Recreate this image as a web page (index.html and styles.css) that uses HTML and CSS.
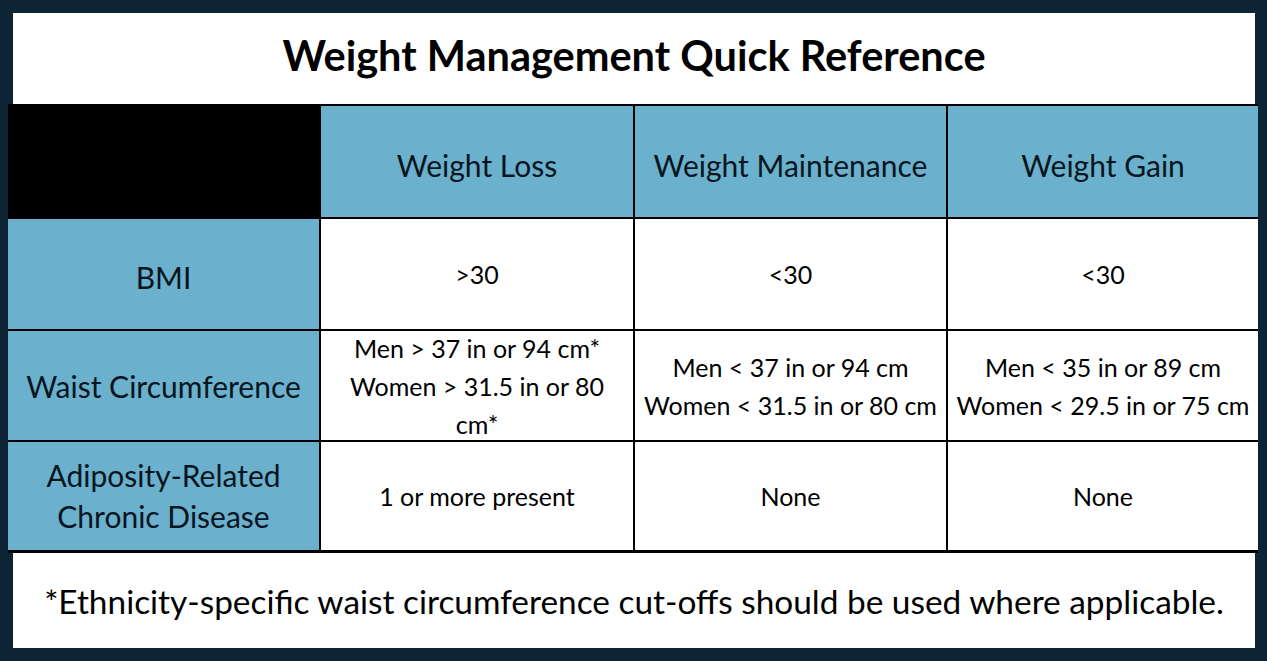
FILE: index.html
```html
<!DOCTYPE html>
<html>
<head>
<meta charset="utf-8">
<link rel="stylesheet" href="styles.css">
</head>
<body>
<div class="frame">
  <div class="title">Weight Management Quick Reference</div>
  <div class="grid">
    <div class="corner"></div>
    <div class="head">Weight Loss</div>
    <div class="head">Weight Maintenance</div>
    <div class="head">Weight Gain</div>

    <div class="rowhead bmi">BMI</div>
    <div class="cell">&gt;30</div>
    <div class="cell">&lt;30</div>
    <div class="cell">&lt;30</div>

    <div class="rowhead">Waist Circumference</div>
    <div class="cell tall">Men &gt; 37 in or 94 cm*<br>Women &gt; 31.5 in or 80 cm*</div>
    <div class="cell">Men &lt; 37 in or 94 cm<br>Women &lt; 31.5 in or 80 cm</div>
    <div class="cell">Men &lt; 35 in or 89 cm<br>Women &lt; 29.5 in or 75 cm</div>

    <div class="rowhead two">Adiposity-Related<br>Chronic Disease</div>
    <div class="cell">1 or more present</div>
    <div class="cell">None</div>
    <div class="cell">None</div>
  </div>
  <div class="footer">*Ethnicity-specific waist circumference cut-offs should be used where applicable.</div>
</div>
</body>
</html>
```
FILE: styles.css
```css
* { box-sizing: border-box; }
html, body { margin: 0; padding: 0; }
body {
  background: #0c2433;
  font-family: Lato, "Open Sans", sans-serif;
}
.frame {
  width: 1267px;
  height: 661px;
  background: #0c2433;
  padding: 13px 9px 13px 8px;
  display: flex;
  flex-direction: column;
}
.title {
  height: 91px;
  margin: 0 3px 0 5px;
  background: #fff;
  color: #000;
  font-weight: 700;
  font-size: 41.5px;
  display: flex;
  align-items: center;
  justify-content: center;
  padding-bottom: 8px;
}
.grid {
  display: grid;
  grid-template-columns: 311px 312px 311px 310px;
  grid-template-rows: 111px 110px 109px 108px;
  gap: 2px;
  padding: 2px 0 3px 0;
  background: #000;
  width: 1250px;
}
.grid > div {
  display: flex;
  align-items: center;
  justify-content: center;
  text-align: center;
}
.corner { background: #000; }
.head, .rowhead {
  background: #6bb0cc;
  color: #07151e;
  font-size: 30px;
}
.head { padding-top: 6px; }
.rowhead.bmi { padding-top: 5px; }
.rowhead.two { line-height: 41px; }
.cell {
  background: #fff;
  color: #000;
  font-size: 25px;
  line-height: 38px;
}
.cell.tall { padding: 0 14px; }
.footer {
  flex: 1;
  margin: 0 3px 0 5px;
  background: #fff;
  color: #000;
  font-size: 33.4px;
  display: flex;
  align-items: center;
  justify-content: center;
}
```
